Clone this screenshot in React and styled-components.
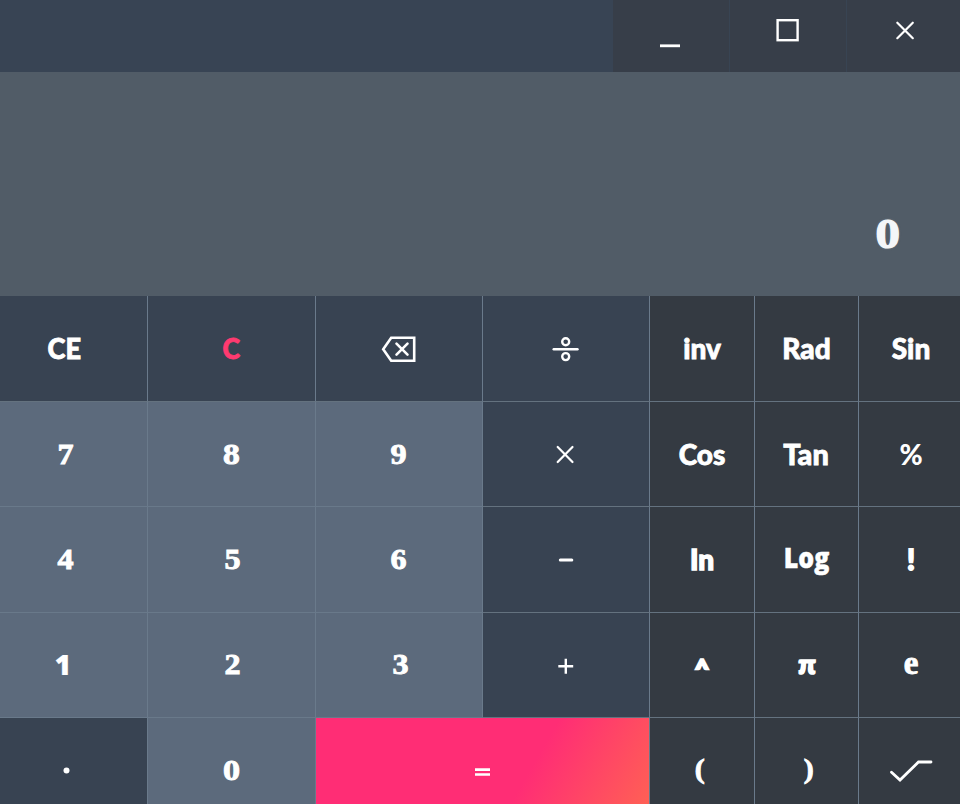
import React from "react";
import styled, { createGlobalStyle } from "styled-components";

const GlobalStyle = createGlobalStyle`
  * { box-sizing: border-box; }
  body { margin: 0; overflow: hidden; background: #384352; }
`;

const Calculator = styled.main`
  width: 960px;
  height: 804px;
  overflow: hidden;
  display: flex;
  flex-direction: column;
  color: #fff;
  font-family: Lato, sans-serif;
`;

const TitleBar = styled.header`
  height: 72px;
  flex: none;
  display: flex;
  justify-content: flex-end;
  background: #384454;
`;

const WindowButton = styled.button`
  width: ${(p) => p.$width}px;
  height: 72px;
  padding: 0;
  border: 0;
  border-right: ${(p) => (p.$last ? "0" : "1px solid #384453")};
  background: #373e49;
  color: #fff;
`;

const Display = styled.output`
  height: 224px;
  flex: none;
  display: flex;
  justify-content: flex-end;
  align-items: flex-end;
  padding: 0 62px 40px 0;
  background: #515c67;
`;

const Reading = styled.span`
  font: bold 43px/44px "Liberation Serif", serif;
  color: #f4f6f8;
  -webkit-text-stroke: 1.2px #f4f6f8;
  text-shadow: 0 0 2px rgba(230, 235, 240, 0.5);
  transform: scaleX(1.14);
`;

const Keypad = styled.section`
  flex: none;
  display: grid;
  margin-left: -19px;
  width: 983px;
  grid-template-columns: 167px 168px 167px 167px 105px 104px 105px;
  grid-template-rows: 106px 105px 106px 105px 106px;
`;

const tones = {
  action: "#384352",
  digit: "#5c6a7c",
  science: "#343a42",
  equals: "linear-gradient(120deg, #ff2d75 0%, #ff2d75 62%, #ff6154 98%)",
};

const Key = styled.button`
  display: flex;
  align-items: center;
  justify-content: center;
  grid-column: span ${(p) => p.$span || 1};
  padding: 0;
  border: 0;
  border-right: 1px solid #6a7a8b;
  border-bottom: 1px solid ${(p) => (p.$tone === "digit" ? "#69798a" : "#64727f")};
  background: ${(p) => tones[p.$tone]};
  color: ${(p) => p.$color || "#fff"};
`;

const Label = styled.span`
  display: block;
  white-space: nowrap;
  line-height: 34px;
  font-family: ${(p) => (p.$serif ? '"Liberation Serif", serif' : p.$open ? '"Open Sans", sans-serif' : "Lato, sans-serif")};
  font-size: ${(p) => p.$size || (p.$serif ? 30 : 28)}px;
  font-weight: ${(p) => (p.$serif ? 700 : p.$open ? 800 : 900)};
  -webkit-text-stroke: ${(p) => p.$ink ?? (p.$serif ? 0.9 : 0.8)}px currentColor;
  transform: translate(${(p) => p.$x || 0}px, ${(p) => p.$y ?? -1}px)
    scale(${(p) => p.$stretch || (p.$serif ? 1.07 : 1)}, ${(p) => p.$tall || 1});
`;

const Glyph = styled.svg`
  display: block;
  flex: none;
  fill: none;
  stroke: currentColor;
  stroke-width: ${(p) => p.$weight || 2};
`;

const KeyIcon = ({ children, weight, cap = "round" }) => (
  <Glyph width="104" height="104" viewBox="0 0 104 104" $weight={weight} strokeLinecap={cap}>
    {children}
  </Glyph>
);

const icons = {
  backspace: (
    <KeyIcon weight={2.6}>
      <path d="M44.2 40.8H67.2V63.7H44.2L36.2 52.3Z" strokeLinejoin="miter" />
      <path d="M49.5 46.7 60.5 57.7M60.5 46.7 49.5 57.7" />
    </KeyIcon>
  ),
  divide: (
    <KeyIcon weight={2.4}>
      <path d="M39.7 52.2H63.5" />
      <circle cx="51.7" cy="44.8" r="3.5" />
      <circle cx="51.7" cy="59.6" r="3.5" />
    </KeyIcon>
  ),
  multiply: (
    <KeyIcon weight={2.2}>
      <path d="M43.7 45 58.5 60M58.5 45 43.7 60" />
    </KeyIcon>
  ),
  minus: (
    <KeyIcon weight={3}>
      <path d="M46.3 52H57.8" />
    </KeyIcon>
  ),
  plus: (
    <KeyIcon weight={2.4} cap="butt">
      <path d="M44.3 53.3H59.2M51.8 45.8V60.8" />
    </KeyIcon>
  ),
  root: (
    <KeyIcon weight={2.8}>
      <path d="M32.5 53.2 41 61 59.5 43H72" strokeLinejoin="miter" />
    </KeyIcon>
  ),
  dot: (
    <KeyIcon>
      <circle cx="54.5" cy="51.5" r="3" fill="currentColor" stroke="none" />
    </KeyIcon>
  ),
  equals: (
    <KeyIcon weight={2.7} cap="butt">
      <path d="M44 50.7H59M44 55.5H59" />
    </KeyIcon>
  ),
};

const keys = [
  { text: "CE", stretch: 0.97 },
  { text: "C", color: "#ff3a70", stretch: 0.95 },
  { icon: "backspace", name: "Backspace" },
  { icon: "divide", name: "Divide" },
  { text: "inv", tone: "science" },
  { text: "Rad", tone: "science" },
  { text: "Sin", tone: "science" },

  { text: "7", tone: "digit", serif: true, x: 1, y: 0 },
  { text: "8", tone: "digit", serif: true, y: 0, stretch: 1.12 },
  { text: "9", tone: "digit", serif: true, y: 0, x: -1 },
  { icon: "multiply", name: "Multiply" },
  { text: "Cos", tone: "science", y: -0.5 },
  { text: "Tan", tone: "science", y: -0.5, stretch: 1.03 },
  { text: "%", tone: "science", y: -0.5, ink: 0 },

  { text: "4", tone: "digit", serif: true, x: 1 },
  { text: "5", tone: "digit", serif: true, x: 1 },
  { text: "6", tone: "digit", serif: true, x: -1 },
  { icon: "minus", name: "Minus" },
  { text: "In", tone: "science", y: -1.5, ink: 1.4 },
  { text: "Log", tone: "science", open: true, stretch: 0.89, y: -3, ink: 0.5 },
  { text: "!", tone: "science", ink: 1.8, y: -1.5 },

  { text: "1", tone: "digit", open: true, ink: 0.2, x: -1, y: -1 },
  { text: "2", tone: "digit", serif: true, x: 1 },
  { text: "3", tone: "digit", serif: true, x: 1 },
  { icon: "plus", name: "Plus" },
  { text: "^", tone: "science", ink: 2.4, size: 24, y: 3 },
  { text: "π", tone: "science", ink: 1.8, y: -1.5, stretch: 0.98, tall: 0.92 },
  { text: "e", tone: "science", serif: true, size: 33, stretch: 1, y: -2.5 },

  { icon: "dot", name: "Decimal point" },
  { text: "0", tone: "digit", serif: true, stretch: 1.14 },
  { icon: "equals", name: "Equals", tone: "equals", span: 2 },
  { text: "(", tone: "science", serif: true, x: -2, y: -2, size: 28 },
  { text: ")", tone: "science", serif: true, x: 2, y: -2, size: 28 },
  { icon: "root", name: "Square root", tone: "science" },
];

export default function App() {
  return (
    <Calculator>
      <GlobalStyle />
      <TitleBar>
        <WindowButton $width={117} aria-label="Minimize">
          <Glyph width="116" height="72" $weight={2.8}><path d="M47 45.8H67" /></Glyph>
        </WindowButton>
        <WindowButton $width={117} aria-label="Maximize">
          <Glyph width="116" height="72" $weight={2.4}><rect x="47.6" y="20.2" width="20" height="20" /></Glyph>
        </WindowButton>
        <WindowButton $width={113} $last aria-label="Close">
          <Glyph width="113" height="72" $weight={2.2} strokeLinecap="round"><path d="M50.3 22.7 65.8 38.2M65.8 22.7 50.3 38.2" /></Glyph>
        </WindowButton>
      </TitleBar>
      <Display><Reading>0</Reading></Display>
      <Keypad>
        {keys.map((k) => (
          <Key key={k.text || k.icon} $tone={k.tone || "action"} $span={k.span} $color={k.color} aria-label={k.name}>
            {k.icon ? icons[k.icon] : (
              <Label $serif={k.serif} $open={k.open} $size={k.size} $ink={k.ink} $x={k.x} $y={k.y} $stretch={k.stretch} $tall={k.tall}>{k.text}</Label>
            )}
          </Key>
        ))}
      </Keypad>
    </Calculator>
  );
}
